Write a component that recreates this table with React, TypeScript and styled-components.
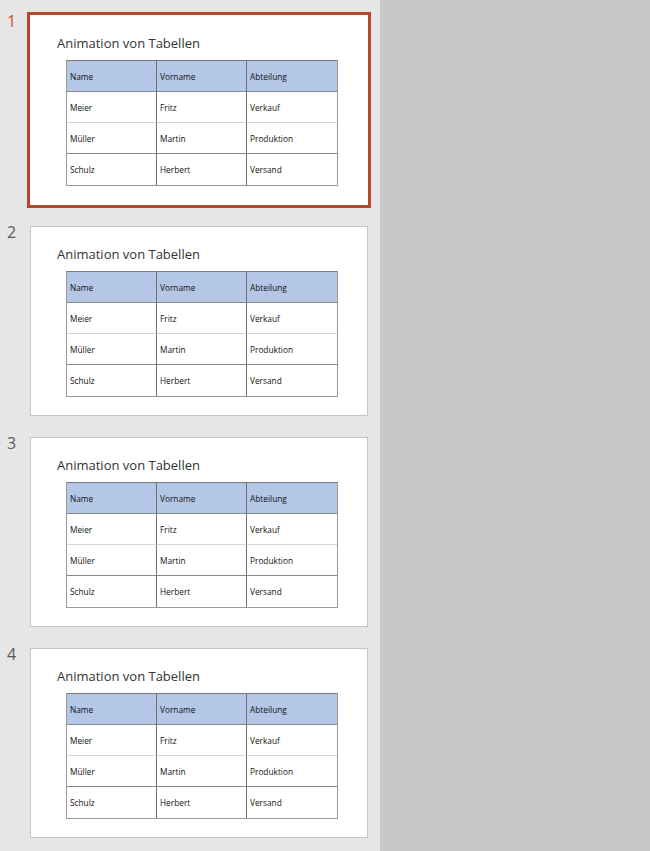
import React from "react";
import styled, { createGlobalStyle } from "styled-components";

const Global = createGlobalStyle`
  html, body { margin: 0; padding: 0; background: #c8c8c8; }
  body { font-family: "Open Sans", "Liberation Sans", sans-serif; }
`;

const Page = styled.div`
  display: flex;
  height: 851px;
  overflow: hidden;
`;

const Panel = styled.div`
  width: 380px;
  flex: none;
  background: #e6e6e6;
  display: flex;
  flex-direction: column;
  gap: 21px;
  padding-top: 15px;
  box-sizing: border-box;
`;

const Item = styled.div`
  display: flex;
  align-items: flex-start;
`;

const Num = styled.div<{ $active: boolean }>`
  width: 30px;
  flex: none;
  box-sizing: border-box;
  padding-left: 7px;
  margin-top: -5px;
  font-size: 16px;
  line-height: 22px;
  color: ${(p) => (p.$active ? "#c8552f" : "#595959")};
`;

const Thumb = styled.div<{ $active: boolean }>`
  width: 338px;
  height: 190px;
  box-sizing: border-box;
  background: #fff;
  border: 1px solid ${(p) => (p.$active ? "#fff" : "#c6c6c6")};
  outline: ${(p) => (p.$active ? "3px solid #b7472a" : "none")};
  padding: 18px 0 0 26px;
`;

const Title = styled.div`
  font-size: 13px;
  line-height: 18px;
  color: #333;
  margin-bottom: 8px;
`;

const Table = styled.div`
  margin-left: 9px;
  width: 272px;
  display: grid;
  grid-template-columns: repeat(3, 1fr);
  border: 1px solid #9a9a9a;
  border-top-color: #7a7a7a;
  box-sizing: border-box;
`;

const Cell = styled.div<{ $head?: boolean; $last?: boolean; $soft?: boolean; $end?: boolean }>`
  height: 31px;
  box-sizing: border-box;
  display: flex;
  align-items: center;
  padding-left: 3px;
  font-size: 8.3px;
  color: #111;
  background: ${(p) => (p.$head ? "#b4c7e7" : "#fff")};
  border-right: ${(p) => (p.$last ? "none" : "1px solid #6f6f6f")};
  border-bottom: ${(p) =>
    p.$end ? "none" : `1px solid ${p.$soft ? "#d4d4d4" : "#8a8a8a"}`};
`;

const rows = [
  ["Name", "Vorname", "Abteilung"],
  ["Meier", "Fritz", "Verkauf"],
  ["Müller", "Martin", "Produktion"],
  ["Schulz", "Herbert", "Versand"],
];

function Slide() {
  return (
    <>
      <Title>Animation von Tabellen</Title>
      <Table>
        {rows.map((r, ri) =>
          r.map((c, ci) => (
            <Cell
              key={`${ri}-${ci}`}
              $head={ri === 0}
              $last={ci === 2}
              $soft={ri === 1}
              $end={ri === 3}
            >
              {c}
            </Cell>
          ))
        )}
      </Table>
    </>
  );
}

export default function App() {
  return (
    <>
      <Global />
      <Page>
        <Panel>
          {[1, 2, 3, 4].map((n) => (
            <Item key={n}>
              <Num $active={n === 1}>{n}</Num>
              <Thumb $active={n === 1}>
                <Slide />
              </Thumb>
            </Item>
          ))}
        </Panel>
      </Page>
    </>
  );
}
